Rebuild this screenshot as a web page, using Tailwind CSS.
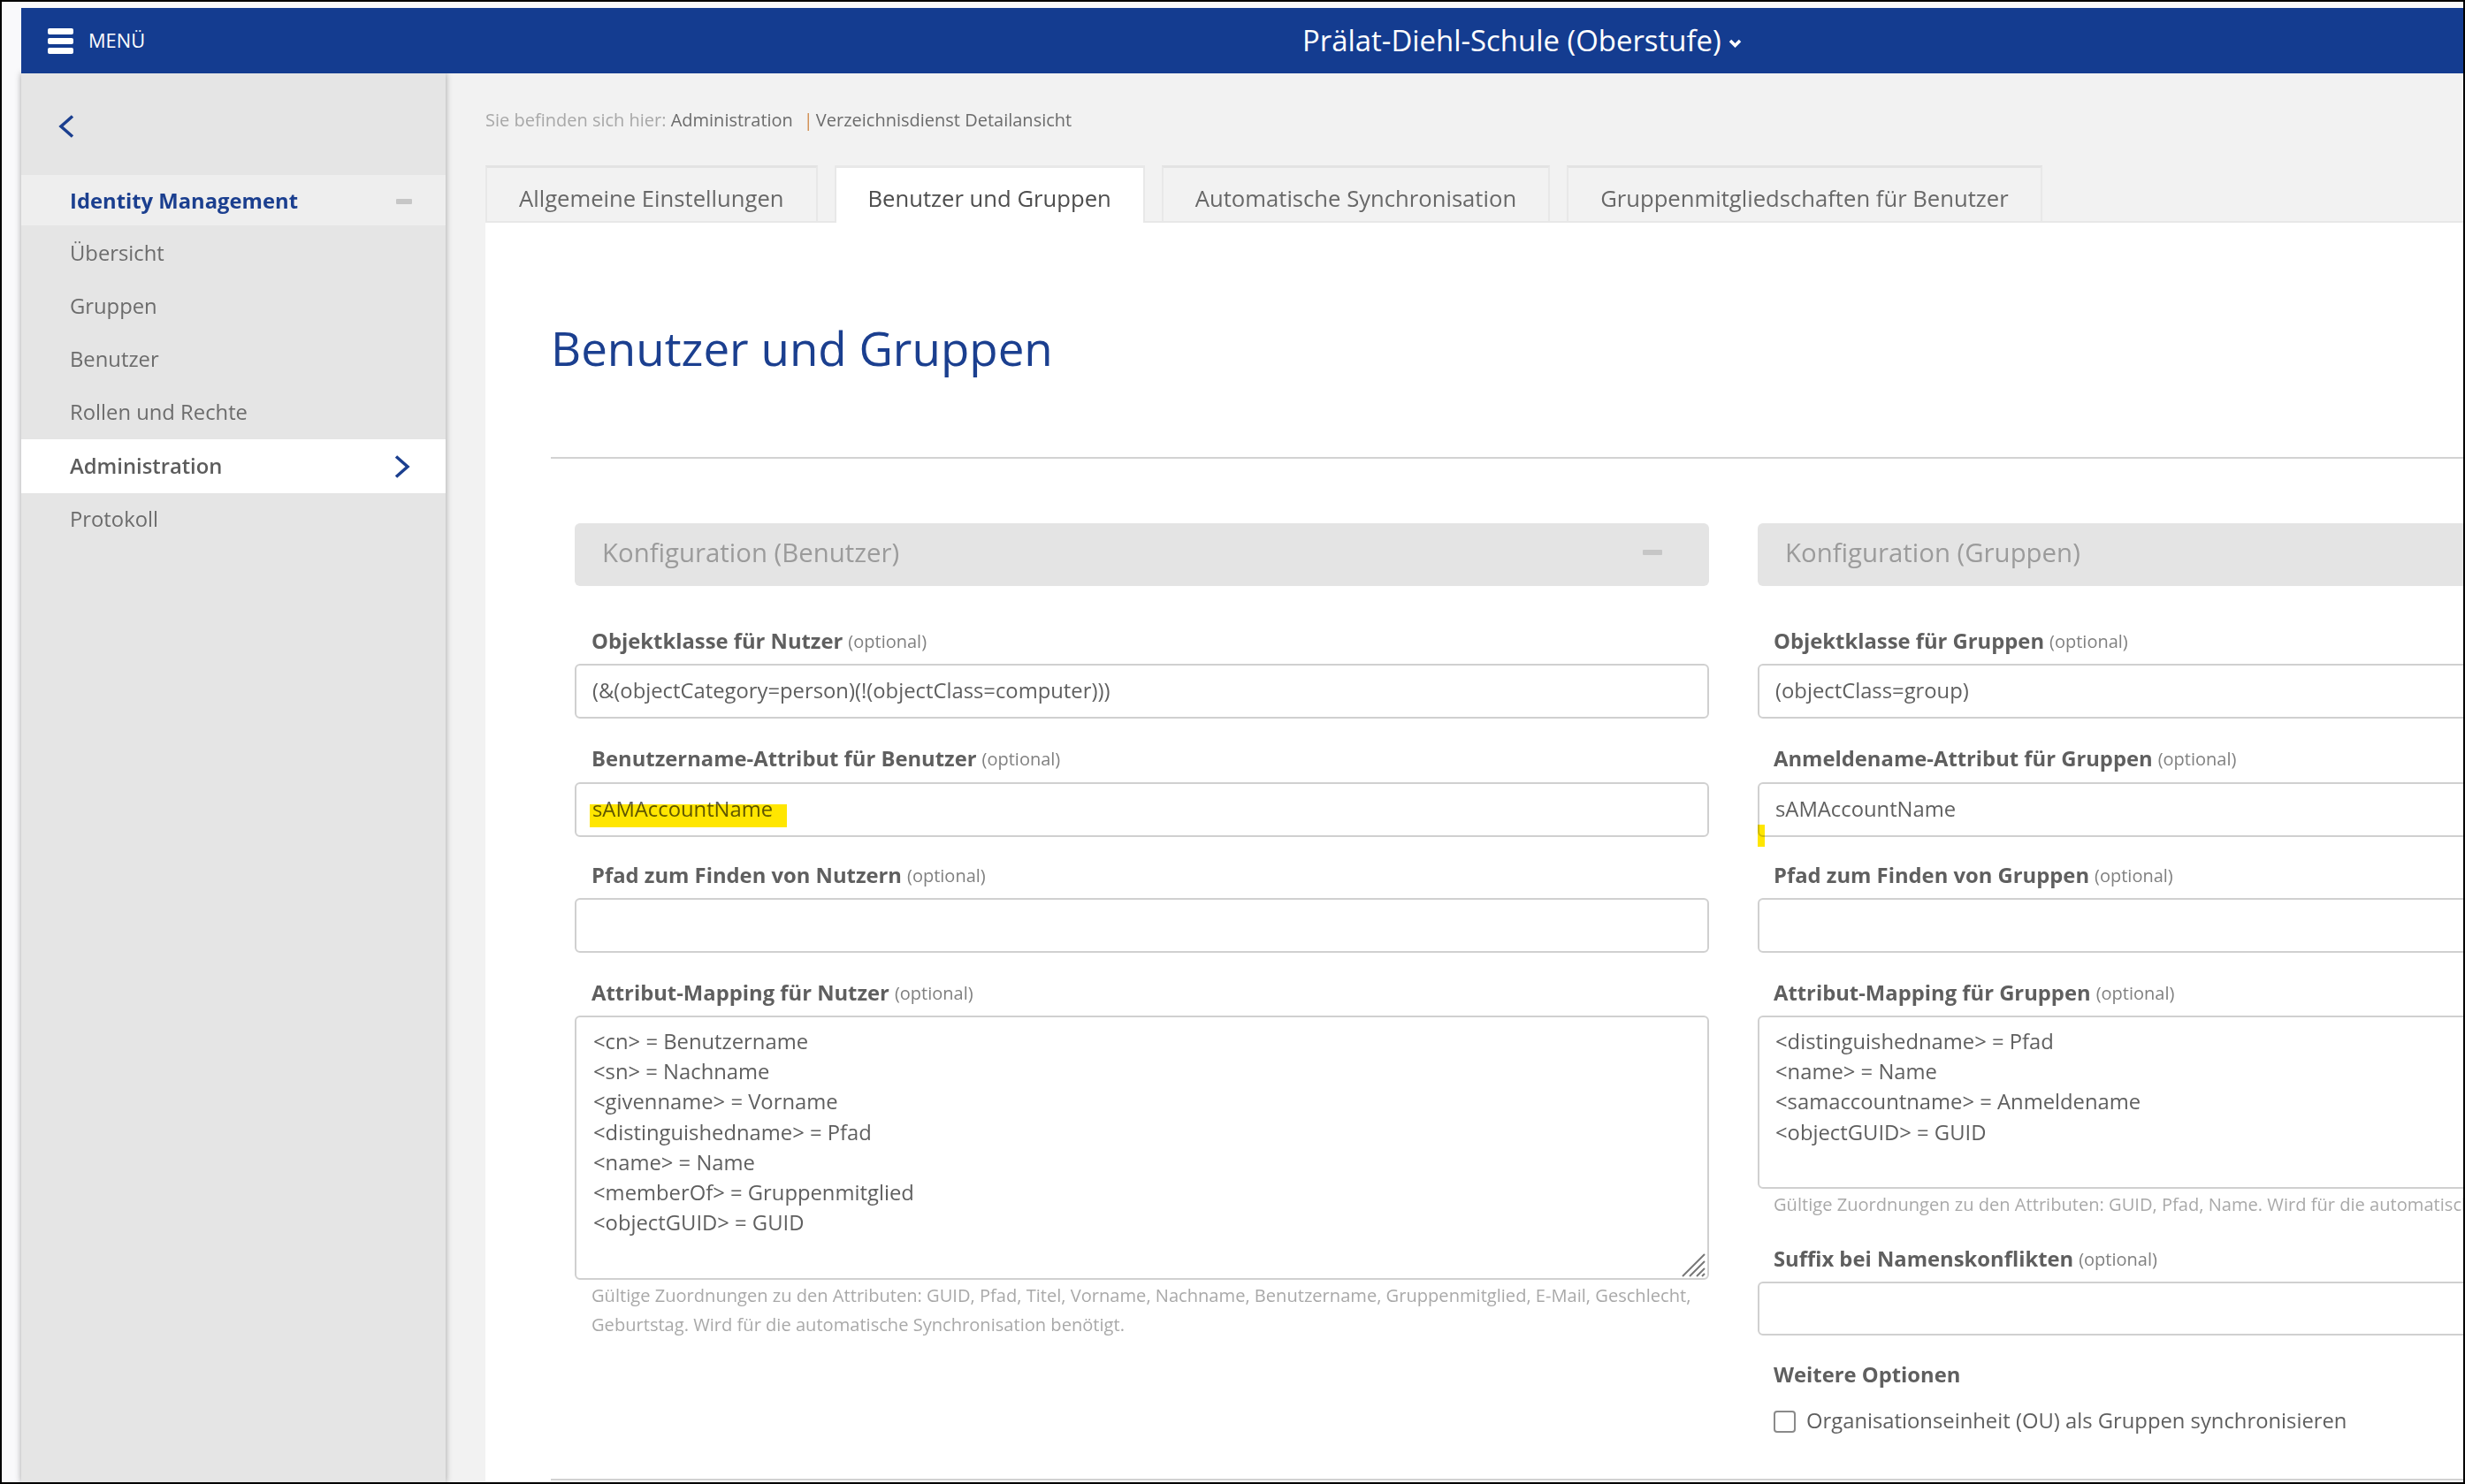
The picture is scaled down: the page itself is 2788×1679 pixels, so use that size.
<!DOCTYPE html>
<html lang="de">
  <head>
    <meta charset="UTF-8" />
    <title>Verzeichnisdienst Detailansicht</title>
    <script src="https://cdn.jsdelivr.net/npm/@tailwindcss/browser@4"></script>
  </head>
  <body class="h-screen overflow-hidden bg-black pt-[2px] pl-[2px] pr-[2px] pb-[2px] font-['Open_Sans',sans-serif] text-[23.8px]">
    <div class="flex h-full flex-col bg-[#f9f9fb] pt-[7px] pl-[22px] blur-[0.6px]">
      <!-- Top bar -->
      <header class="relative z-20 flex h-[74px] shrink-0 items-center bg-[#143c90] text-white">
        <div class="flex w-[1449px] items-center gap-[17px] pl-[30px]">
          <div class="flex w-[29px] flex-col gap-[4px]">
            <span class="h-[7px] rounded-[2px] bg-white"></span>
            <span class="h-[7px] rounded-[2px] bg-white"></span>
            <span class="h-[7px] rounded-[2px] bg-white"></span>
          </div>
          <span class="text-[21.8px]">MENÜ</span>
        </div>
        <div class="flex items-center gap-[8px]">
          <span class="text-[32.9px]">Prälat-Diehl-Schule (Oberstufe)</span>
          <svg class="mt-[6px]" width="15" height="10" viewBox="0 0 15 10" fill="none" stroke="#fff" stroke-width="3.5"><path d="M2 2l5.5 5.5L13 2" /></svg>
        </div>
      </header>

      <div class="flex min-h-0 flex-1">
        <!-- Sidebar -->
        <aside class="relative z-10 w-[480px] shrink-0 bg-[#e5e5e5] text-[#6c6c6c] shadow-[0_0_7px_rgba(0,0,0,.35)]">
          <div class="flex h-[115px] items-start pt-[47px] pl-[42px]">
            <svg width="18" height="26" viewBox="0 0 18 26" fill="none" stroke="#1b3f8f" stroke-width="3.5"><path d="M16 1.5L3 13l13 11.5" /></svg>
          </div>
          <div class="mb-[2px] flex h-[57px] items-center justify-between bg-[#eeeeee] pt-[2px] pr-[38px] pl-[55px]">
            <span class="font-bold text-[#1b3f8f]">Identity Management</span>
            <span class="h-[6px] w-[18px] rounded-[1px] bg-[#c6c6c6]"></span>
          </div>
          <div class="flex h-[60px] items-center pl-[55px]">Übersicht</div>
          <div class="flex h-[60px] items-center pl-[55px]">Gruppen</div>
          <div class="flex h-[60px] items-center pl-[55px]">Benutzer</div>
          <div class="flex h-[60px] items-center pl-[55px]">Rollen und Rechte</div>
          <div class="flex h-[61px] items-center justify-between bg-white pr-[40px] pl-[55px] font-semibold text-[#5c5c5c]">
            <span>Administration</span>
            <svg width="18" height="26" viewBox="0 0 18 26" fill="none" stroke="#1b3f8f" stroke-width="3.5"><path d="M2 1.5L15 13 2 24.5" /></svg>
          </div>
          <div class="flex h-[60px] items-center pl-[55px]">Protokoll</div>
        </aside>

        <!-- Main content -->
        <main class="flex min-w-0 flex-1 flex-col overflow-hidden bg-[#f2f2f2] pl-[45px]">
          <div class="flex h-[30px] mt-[38px] mb-[36px] shrink-0 items-center whitespace-nowrap text-[20px] text-[#a8a8a8]">
            <span>Sie befinden sich hier:&nbsp;</span>
            <span class="text-[#6c6c6c]">Administration</span>
            <span class="ml-[12px] mr-[3px] text-[#d08a4a]">|</span>
            <span class="text-[#6c6c6c]">Verzeichnisdienst Detailansicht</span>
          </div>

          <nav class="relative z-10 -mb-[2px] flex h-[65px] shrink-0 items-stretch gap-[19px] whitespace-nowrap text-[25.65px] text-[#686868]">
            <div class="flex items-center border-x-2 border-t-[3px] border-x-[#e8e8e8] border-t-[#e3e3e3] px-[36px] pt-[8px]">Allgemeine Einstellungen</div>
            <div class="flex items-center border-x-2 border-t-[3px] border-x-[#e8e8e8] border-t-[#e8e8e8] bg-white px-[36px] pt-[8px] text-[#4d4d4d]">Benutzer und Gruppen</div>
            <div class="flex items-center border-x-2 border-t-[3px] border-x-[#e8e8e8] border-t-[#e3e3e3] px-[36px] pt-[8px]">Automatische Synchronisation</div>
            <div class="flex items-center border-x-2 border-t-[3px] border-x-[#e8e8e8] border-t-[#e3e3e3] px-[36px] pt-[8px]">Gruppenmitgliedschaften für Benutzer</div>
          </nav>

          <section class="min-h-0 flex-1 border-t-2 border-[#e8e8e8] bg-white pl-[74px]">
            <h1 class="mt-[111px] h-[60px] whitespace-nowrap text-[52.9px] leading-[60px] text-[#1b3f8f]">Benutzer und Gruppen</h1>
            <hr class="mt-[94px] border-t-2 border-[#d2d2d2]" />

            <div class="mt-[73px] flex h-[1081px] gap-[55px] pl-[27px] text-[#5f5f5f]">
              <!-- Benutzer -->
              <div class="w-[1283px] shrink-0">
                <div class="flex h-[71px] items-center justify-between rounded-md bg-[#e4e4e4] pr-[53px] pb-[5px] pl-[31px] text-[29.4px] text-[#9b9b9b]">
                  <span>Konfiguration (Benutzer)</span>
                  <span class="h-[6px] w-[22px] rounded-[1px] bg-[#c6c6c6]"></span>
                </div>

                <label class="mt-[38px] flex h-[50px] items-center gap-[6px] pl-[19px] font-bold">Objektklasse für Nutzer <small class="text-[20px] font-normal text-[#808080]">(optional)</small></label>
                <input type="text" value="(&amp;(objectCategory=person)(!(objectClass=computer)))" class="h-[62px] w-full rounded-md border-2 border-[#d0d0d0] px-[18px] pb-[2px] text-[#5f5f5f]" />

                <label class="mt-[22px] flex h-[50px] items-center gap-[6px] pb-[2px] pl-[19px] font-bold">Benutzername-Attribut für Benutzer <small class="text-[20px] font-normal text-[#808080]">(optional)</small></label>
                <div class="relative">
                  <input type="text" value="sAMAccountName" class="h-[62px] w-full rounded-md border-2 border-[#d0d0d0] px-[18px] pb-[2px] text-[#5f5f5f]" />
                  <span class="absolute top-[25px] left-[17px] h-[26px] w-[223px] bg-[#ffe600] mix-blend-multiply"></span>
                </div>

                <label class="mt-[19px] flex h-[50px] items-center gap-[6px] pl-[19px] font-bold">Pfad zum Finden von Nutzern <small class="text-[20px] font-normal text-[#808080]">(optional)</small></label>
                <input type="text" class="h-[62px] w-full rounded-md border-2 border-[#d0d0d0] px-[18px]" />

                <label class="mt-[21px] flex h-[50px] items-center gap-[6px] pl-[19px] font-bold">Attribut-Mapping für Nutzer <small class="text-[20px] font-normal text-[#808080]">(optional)</small></label>
                <div class="relative">
                  <textarea class="block h-[299px] w-full resize-none rounded-md border-2 border-[#d0d0d0] px-[19px] pt-[10px] leading-[34.2px] text-[#5f5f5f]">&lt;cn&gt; = Benutzername
&lt;sn&gt; = Nachname
&lt;givenname&gt; = Vorname
&lt;distinguishedname&gt; = Pfad
&lt;name&gt; = Name
&lt;memberOf&gt; = Gruppenmitglied
&lt;objectGUID&gt; = GUID</textarea>
                  <svg class="absolute right-[4px] bottom-[3px]" width="27" height="27" viewBox="0 0 27 27" fill="none" stroke="#777" stroke-width="2"><path d="M1 26L26 1M9 26L26 9M17 26l9-9M23 26l3-3" /></svg>
                </div>
                <p class="mt-[1px] pr-[15px] pl-[19px] text-[20.1px] leading-[33px] text-[#a9a9a9]">Gültige Zuordnungen zu den Attributen: GUID, Pfad, Titel, Vorname, Nachname, Benutzername, Gruppenmitglied, E-Mail, Geschlecht, Geburtstag. Wird für die automatische Synchronisation benötigt.</p>
              </div>

              <!-- Gruppen -->
              <div class="w-[1283px] shrink-0">
                <div class="flex h-[71px] items-center rounded-md bg-[#e4e4e4] pb-[5px] pl-[31px] text-[29.4px] text-[#9b9b9b]">
                  <span>Konfiguration (Gruppen)</span>
                </div>

                <label class="mt-[38px] flex h-[50px] items-center gap-[6px] pl-[18px] font-bold">Objektklasse für Gruppen <small class="text-[20px] font-normal text-[#808080]">(optional)</small></label>
                <input type="text" value="(objectClass=group)" class="h-[62px] w-full rounded-md border-2 border-[#d0d0d0] px-[18px] pb-[2px] text-[#5f5f5f]" />

                <label class="mt-[22px] flex h-[50px] items-center gap-[6px] pb-[2px] pl-[18px] font-bold">Anmeldename-Attribut für Gruppen <small class="text-[20px] font-normal text-[#808080]">(optional)</small></label>
                <div class="relative">
                  <input type="text" value="sAMAccountName" class="h-[62px] w-full rounded-md border-2 border-[#d0d0d0] px-[18px] pb-[2px] text-[#5f5f5f]" />
                  <span class="absolute top-[48px] left-0 h-[25px] w-[8px] bg-[#ffe600] mix-blend-multiply"></span>
                </div>

                <label class="mt-[19px] flex h-[50px] items-center gap-[6px] pl-[18px] font-bold">Pfad zum Finden von Gruppen <small class="text-[20px] font-normal text-[#808080]">(optional)</small></label>
                <input type="text" class="h-[62px] w-full rounded-md border-2 border-[#d0d0d0] px-[18px]" />

                <label class="mt-[21px] flex h-[50px] items-center gap-[6px] pl-[18px] font-bold">Attribut-Mapping für Gruppen <small class="text-[20px] font-normal text-[#808080]">(optional)</small></label>
                <textarea class="block h-[196px] w-full resize-none rounded-md border-2 border-[#d0d0d0] px-[18px] pt-[10px] leading-[34.2px] text-[#5f5f5f]">&lt;distinguishedname&gt; = Pfad
&lt;name&gt; = Name
&lt;samaccountname&gt; = Anmeldename
&lt;objectGUID&gt; = GUID</textarea>
                <p class="mt-[1px] whitespace-nowrap pl-[18px] text-[20.1px] leading-[33px] text-[#a9a9a9]">Gültige Zuordnungen zu den Attributen: GUID, Pfad, Name. Wird für die automatische Synchronisation benötigt.</p>

                <label class="mt-[21px] flex h-[50px] items-center gap-[6px] pl-[18px] font-bold">Suffix bei Namenskonflikten <small class="text-[20px] font-normal text-[#808080]">(optional)</small></label>
                <input type="text" class="h-[61px] w-full rounded-md border-2 border-[#d0d0d0] px-[18px]" />

                <div class="mt-[27px] flex h-[36px] items-center pl-[18px] font-bold">Weitere Optionen</div>
                <label class="mt-[21px] flex h-[26px] items-center gap-[12px] pl-[18px]">
                  <span class="h-[25px] w-[25px] rounded-[4px] border-2 border-[#8a8a8a] bg-white"></span>
                  <span>Organisationseinheit (OU) als Gruppen synchronisieren</span>
                </label>
              </div>
            </div>
            <hr class="border-t-2 border-[#d2d2d2]" />
          </section>
        </main>
      </div>
    </div>
  </body>
</html>
